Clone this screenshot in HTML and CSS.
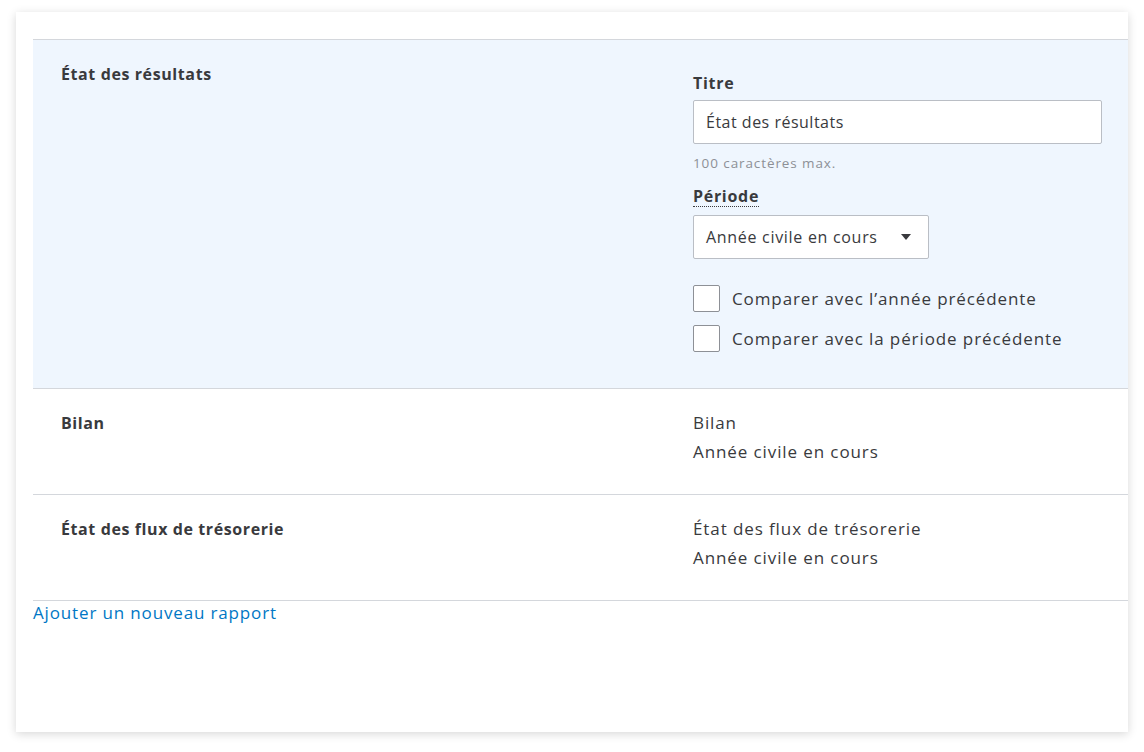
FILE: index.html
```html
<!DOCTYPE html>
<html lang="fr">
<head>
<meta charset="utf-8">
<title>Rapports</title>
<link rel="stylesheet" href="styles.css">
</head>
<body>
<div class="page">
  <div class="card">
    <div class="rows">
      <div class="row row-active">
        <div class="row-title">État des résultats</div>
        <div class="row-form">
          <label class="label">Titre</label>
          <div class="input">État des résultats</div>
          <div class="helper">100 caractères max.</div>
          <div class="label label-dotted">Période</div>
          <div class="select">
            <span>Année civile en cours</span>
            <svg class="caret" width="10" height="6" viewBox="0 0 10 6"><path d="M0 0h10L5 6z" fill="#393a3d"/></svg>
          </div>
          <div class="checks">
            <div class="check"><span class="box"></span><span>Comparer avec l’année précédente</span></div>
            <div class="check"><span class="box"></span><span>Comparer avec la période précédente</span></div>
          </div>
        </div>
      </div>
      <div class="row">
        <div class="row-title">Bilan</div>
        <div class="row-info">
          <div>Bilan</div>
          <div>Année civile en cours</div>
        </div>
      </div>
      <div class="row">
        <div class="row-title">État des flux de trésorerie</div>
        <div class="row-info">
          <div>État des flux de trésorerie</div>
          <div>Année civile en cours</div>
        </div>
      </div>
    </div>
    <a class="add-link" href="#">Ajouter un nouveau rapport</a>
  </div>
</div>
</body>
</html>
```

FILE: styles.css
```css
* { box-sizing: border-box; }
html, body { margin: 0; padding: 0; background: #ffffff; }
body {
  font-family: "Open Sans", Lato, sans-serif;
  color: #393a3d;
  font-size: 17px;
  letter-spacing: 0.9px;
}
.page {
  padding: 12px 16px 20px 16px;
}
.card {
  width: 1112px;
  height: 720px;
  background: #ffffff;
  box-shadow: 0 2px 9px rgba(0, 0, 0, 0.16);
  padding: 27px 0 0 17px;
}
.rows {
  border-top: 1px solid #d4d7dc;
}
.row {
  display: grid;
  grid-template-columns: 632px 1fr;
  padding: 20px 0 28px 28px;
  border-bottom: 1px solid #d4d7dc;
}
.row-active {
  background: #eff6fe;
  padding-bottom: 36px;
}
.row-title {
  font-weight: 700;
  font-size: 16px;
  letter-spacing: 0.6px;
  line-height: 28px;
}
.row-form {
  display: flex;
  flex-direction: column;
  align-items: flex-start;
  padding-top: 12px;
}
.label {
  font-weight: 700;
  font-size: 16px;
  letter-spacing: 0.7px;
  line-height: 22px;
  margin-bottom: 6px;
}
.label-dotted {
  margin-top: 14px;
  margin-bottom: 8px;
  line-height: 20px;
  border-bottom: 1px dotted #393a3d;
}
.input {
  width: 409px;
  height: 44px;
  background: #ffffff;
  border: 1px solid #babec5;
  border-radius: 2px;
  padding: 0 12px;
  display: flex;
  align-items: center;
  font-size: 16px;
  letter-spacing: 0.5px;
}
.helper {
  margin-top: 10px;
  font-size: 13.5px;
  letter-spacing: 0.9px;
  line-height: 18px;
  color: #8d9096;
}
.select {
  width: 236px;
  height: 44px;
  background: #ffffff;
  border: 1px solid #babec5;
  border-radius: 2px;
  padding: 0 17px 0 12px;
  display: flex;
  align-items: center;
  justify-content: space-between;
  font-size: 16px;
  letter-spacing: 0.7px;
}
.caret { display: block; }
.checks {
  margin-top: 26px;
  display: flex;
  flex-direction: column;
  gap: 13px;
}
.check {
  display: flex;
  align-items: center;
  gap: 12px;
  line-height: 26px;
}
.box {
  width: 27px;
  height: 27px;
  background: #ffffff;
  border: 1px solid #8d9096;
  border-radius: 2px;
}
.row-info {
  line-height: 29px;
  margin-top: -1px;
}
.add-link {
  display: inline-block;
  color: #0077c5;
  text-decoration: none;
  letter-spacing: 0.85px;
  line-height: 22px;
}
```
